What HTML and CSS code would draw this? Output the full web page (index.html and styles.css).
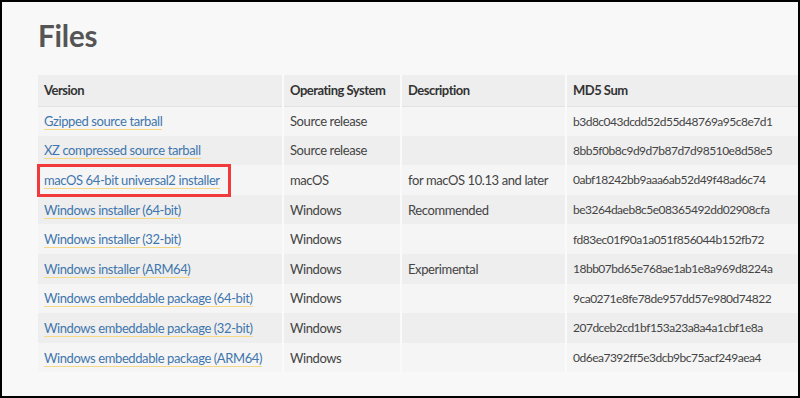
FILE: index.html
```html
<!DOCTYPE html>
<html>
<head>
<meta charset="utf-8">
<link rel="stylesheet" href="styles.css">
</head>
<body>
<div class="frame">
  <h1 class="title">Files</h1>
  <table class="files">
    <thead>
      <tr><th class="c-ver">Version</th><th class="c-os">Operating System</th><th class="c-desc">Description</th><th class="c-md5">MD5 Sum</th></tr>
    </thead>
    <tbody>
      <tr><td><a href="#">Gzipped source tarball</a></td><td>Source release</td><td></td><td class="md5">b3d8c043dcdd52d55d48769a95c8e7d1</td></tr>
      <tr><td><a href="#">XZ compressed source tarball</a></td><td>Source release</td><td></td><td class="md5">8bb5f0b8c9d9d7b87d7d98510e8d58e5</td></tr>
      <tr><td><span class="mark"><a href="#">macOS 64-bit universal2 installer</a></span></td><td>macOS</td><td>for macOS 10.13 and later</td><td class="md5">0abf18242bb9aaa6ab52d49f48ad6c74</td></tr>
      <tr><td><a href="#">Windows installer (64-bit)</a></td><td>Windows</td><td>Recommended</td><td class="md5">be3264daeb8c5e08365492dd02908cfa</td></tr>
      <tr><td><a href="#">Windows installer (32-bit)</a></td><td>Windows</td><td></td><td class="md5">fd83ec01f90a1a051f856044b152fb72</td></tr>
      <tr><td><a href="#">Windows installer (ARM64)</a></td><td>Windows</td><td>Experimental</td><td class="md5">18bb07bd65e768ae1ab1e8a969d8224a</td></tr>
      <tr><td><a href="#">Windows embeddable package (64-bit)</a></td><td>Windows</td><td></td><td class="md5">9ca0271e8fe78de957dd57e980d74822</td></tr>
      <tr><td><a href="#">Windows embeddable package (32-bit)</a></td><td>Windows</td><td></td><td class="md5">207dceb2cd1bf153a23a8a4a1cbf1e8a</td></tr>
      <tr><td><a href="#">Windows embeddable package (ARM64)</a></td><td>Windows</td><td></td><td class="md5">0d6ea7392ff5e3dcb9bc75acf249aea4</td></tr>
    </tbody>
  </table>
</div>
</body>
</html>
```
FILE: styles.css
```css
html, body {
  margin: 0;
  padding: 0;
}
body {
  font-family: "Lato", "Open Sans", sans-serif;
  color: #444;
}
.frame {
  box-sizing: border-box;
  width: 800px;
  height: 398px;
  border: 2px solid #000;
  background: #f8f8f8;
  overflow: hidden;
  padding: 0 0 0 36px;
}
.title {
  margin: 0;
  padding-top: 16px;
  font-size: 29.5px;
  line-height: 36px;
  font-weight: 700;
  color: #555;
  height: 57px;
  letter-spacing: -0.2px;
}
.files {
  border-collapse: collapse;
  width: 788px;
  font-size: 13px;
  letter-spacing: -0.4px;
  table-layout: fixed;
}
.files th, .files td {
  box-sizing: border-box;
  text-align: left;
  padding: 0 6px;
  border-left: 2px solid #fafafa;
  white-space: nowrap;
  overflow: visible;
}
.files th:first-child, .files td:first-child {
  border-left: none;
}
.files th {
  background: #eeeeee;
  height: 31px;
  font-weight: 700;
  color: #333;
  letter-spacing: -0.5px;
}
.files thead tr {
  border-bottom: 1px solid #e2e2e2;
}
.files td {
  height: 29.6px;
}
.files tbody tr:nth-child(odd) {
  background: #f5f5f5;
}
.files tbody tr:nth-child(even) {
  background: #eeeeee;
}
.c-ver { width: 245px; }
.c-os { width: 118px; }
.c-desc { width: 165px; }
.c-md5 { width: 260px; }
.files .md5 {
  font-size: 12px;
  letter-spacing: -0.5px;
}
.files a {
  color: #3f76ad;
  text-decoration: none;
  border-bottom: 1px solid #f5d886;
}
.mark {
  position: relative;
}
.mark::after {
  content: "";
  position: absolute;
  left: -7px;
  right: -11px;
  top: -8px;
  bottom: -9px;
  border: 3px solid #f03a3c;
}
```
